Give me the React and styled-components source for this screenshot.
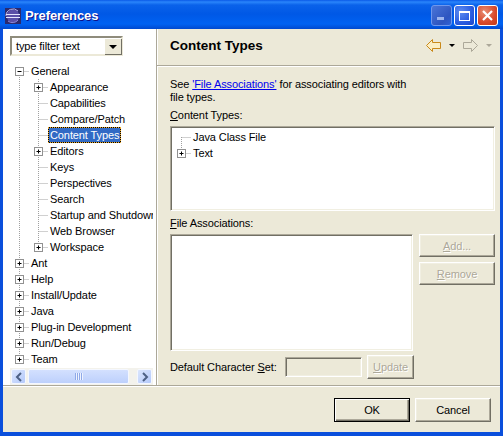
import React from "react";
import styled, { createGlobalStyle } from "styled-components";

const GlobalStyle = createGlobalStyle`
  html, body {
    margin: 0;
    padding: 0;
    background: #ece9d8;
  }
`;

const Window = styled.div`
  width: 503px;
  height: 436px;
  display: flex;
  flex-direction: column;
  overflow: hidden;
  background: #0a4fdc;
  font-family: "Liberation Sans", Arial, sans-serif;
  font-size: 11px;
  letter-spacing: -0.1px;
  color: #000;
`;

const TitleBar = styled.div`
  height: 29px;
  flex: none;
  display: flex;
  align-items: center;
  padding: 2px 5px 0 5px;
  box-sizing: border-box;
  background: linear-gradient(
    to bottom,
    #0a5ae8 0,
    #2a85fb 2px,
    #0a62ea 5px,
    #0058e6 14px,
    #0062f2 24px,
    #0049cf 29px
  );
`;

const TitleText = styled.span`
  margin-left: 4px;
  flex: 1;
  color: #fff;
  font-weight: bold;
  font-size: 13px;
  text-shadow: 1px 1px #0f1089;
`;

const Caption = styled.div`
  display: flex;
  gap: 2px;
`;

const CaptionButton = styled.div`
  width: 21px;
  height: 21px;
  box-sizing: border-box;
  border: 1px solid ${(p) => (p.$dim ? "#6f97ec" : "#fff")};
  border-radius: 3px;
  background: ${(p) =>
    p.$close
      ? "radial-gradient(circle at 35% 30%, #e88d72, #d8482a 60%, #c23a17)"
      : p.$dim
        ? "linear-gradient(135deg, #4a75d8, #2d55c0 70%, #2f62d6)"
        : "radial-gradient(circle at 30% 30%, #5e8cf0, #2a5ce0 60%, #1d45c8)"};
  display: flex;
  align-items: center;
  justify-content: center;
`;

const Client = styled.div`
  flex: 1;
  min-height: 0;
  margin: 0 3px 4px;
  display: flex;
  flex-direction: column;
  background: #ece9d8;
`;

const Split = styled.div`
  height: 356px;
  flex: none;
  display: flex;
  border-bottom: 1px solid #aca899;
  box-shadow: 0 1px #fff;
`;

const Sidebar = styled.div`
  width: 153px;
  flex: none;
  box-sizing: border-box;
  background: #fff;
  padding: 7px 0 0 7px;
  display: flex;
  flex-direction: column;
`;

const Combo = styled.div`
  width: 113px;
  height: 20px;
  box-sizing: border-box;
  display: flex;
  align-items: center;
  justify-content: space-between;
  padding: 0 0 0 4px;
  background: #fff;
  border: 2px solid #8f8c7c;
  border-right-color: #ece9d8;
  border-bottom-color: #ece9d8;
`;

const ComboButton = styled.div`
  width: 17px;
  height: 16px;
  background: #ece9d8;
  border-left: 1px solid #fff;
  border-top: 1px solid #fff;
  box-sizing: border-box;
  box-shadow: 1px 1px #716f64;
  display: flex;
  align-items: center;
  justify-content: center;
`;

const DownTriangle = styled.span`
  width: 0;
  height: 0;
  border-left: ${(p) => p.$size || 4}px solid transparent;
  border-right: ${(p) => p.$size || 4}px solid transparent;
  border-top: ${(p) => p.$size || 4}px solid ${(p) => p.$color || "#000"};
  display: block;
`;

const Tree = styled.div`
  width: 143px;
  height: 305px;
  margin-top: 7px;
  overflow: hidden;
`;

const TreeRow = styled.div`
  height: 16px;
  display: flex;
  align-items: center;
  white-space: nowrap;
`;

const TreeLabel = styled.span`
  padding: 0 2px;
  height: 16px;
  line-height: 16px;
  box-sizing: border-box;
  color: #000;
`;

const SelectedLabel = styled(TreeLabel)`
  padding: 0 1px;
  line-height: 14px;
  color: #fff;
  border: 1px dotted #eaa82c;
  background: linear-gradient(#316ac5, #316ac5) padding-box, #000 border-box;
`;

const Scrollbar = styled.div`
  width: 143px;
  height: 17px;
  box-sizing: border-box;
  padding: 1px;
  display: flex;
  background: #f3f2ec;
`;

const ScrollButton = styled.div`
  width: 15px;
  flex: none;
  box-sizing: border-box;
  border: 1px solid #f4f7ff;
  border-radius: 2px;
  background: linear-gradient(135deg, #dbe6fe, #b4c9fa);
  display: flex;
  align-items: center;
  justify-content: center;
`;

const ScrollThumb = styled.div`
  width: 101px;
  margin: 0 8px 0 2px;
  box-sizing: border-box;
  border: 1px solid #f4f7ff;
  border-radius: 2px;
  background: linear-gradient(to bottom, #d3e0fe, #bdd0fc);
  display: flex;
  align-items: center;
  justify-content: center;
  gap: 1px;
`;

const Grip = styled.span`
  width: 1px;
  height: 7px;
  background: #8fa9e8;
  box-shadow: 1px 0 #eef3ff;
`;

const Main = styled.div`
  flex: 1;
  display: flex;
  flex-direction: column;
  border-left: 1px solid #aca899;
  box-shadow: inset 1px 0 #fff;
`;

const Header = styled.div`
  height: 37px;
  flex: none;
  box-sizing: border-box;
  display: flex;
  align-items: center;
  padding: 0 8px 4px 13px;
  border-bottom: 1px solid #aca899;
  box-shadow: 0 1px #fff;
`;

const HeaderTitle = styled.div`
  flex: 1;
  font-weight: bold;
  font-size: 13.5px;
  letter-spacing: 0;
`;

const HeaderTools = styled.div`
  display: flex;
  align-items: center;
  gap: 8px;
`;

const Body = styled.div`
  flex: 1;
  padding: 12px 5px 0 13px;
  display: flex;
  flex-direction: column;
`;

const Description = styled.div`
  line-height: 13px;
  margin-bottom: 5px;
`;

const LinkText = styled.span`
  color: #0000ee;
  text-decoration: underline;
`;

const FieldLabel = styled.div`
  height: 13px;
  line-height: 13px;
  margin-top: ${(p) => p.$top || 0}px;
`;

const Sunken = styled.div`
  box-sizing: border-box;
  background: ${(p) => (p.$flat ? "#ece9d8" : "#fff")};
  border: 1px solid;
  border-color: #aca899 #fff #fff #aca899;
  box-shadow: inset 1px 1px #716f64, inset -1px -1px #f1efe2;
`;

const TypesList = styled(Sunken)`
  margin-top: 4px;
  height: 85px;
  padding: 2px 0 0 1px;
`;

const AssocRow = styled.div`
  margin-top: 4px;
  display: flex;
  gap: 6px;
`;

const AssocList = styled(Sunken)`
  width: 243px;
  height: 117px;
`;

const SideButtons = styled.div`
  display: flex;
  flex-direction: column;
  gap: 5px;
`;

const PushButton = styled.button`
  width: ${(p) => p.$w}px;
  height: ${(p) => p.$h}px;
  padding: 0;
  box-sizing: border-box;
  font: inherit;
  letter-spacing: inherit;
  background: #ece9d8;
  color: ${(p) => (p.disabled ? "#aca899" : "#000")};
  text-shadow: ${(p) => (p.disabled ? "1px 1px #fff" : "none")};
  border: 1px solid;
  border-color: ${(p) =>
    p.$default ? "#000" : "#fff #716f64 #716f64 #fff"};
  box-shadow: ${(p) =>
    p.$default
      ? "inset 1px 1px #fff, inset -1px -1px #716f64, inset -2px -2px #aca899"
      : "inset -1px -1px #aca899, inset 1px 1px #f1efe2"};
`;

const CharsetRow = styled.div`
  margin-top: 4px;
  display: flex;
  align-items: center;
`;

const CharsetLabel = styled.span`
  width: 115px;
  flex: none;
`;

const CharsetInput = styled(Sunken)`
  width: 77px;
  height: 20px;
  margin-right: 5px;
`;

const Footer = styled.div`
  flex: 1;
  display: flex;
  justify-content: flex-end;
  align-items: flex-start;
  gap: 5px;
  padding: 12px 9px 0 0;
`;

const Mnemonic = styled.span`
  text-decoration: underline;
`;

function Connector({ up, down, right, toggle, open }) {
  return (
    <svg width="19" height="16" style={{ flex: "none", display: "block" }}>
      <g stroke="#a0a0a0" strokeDasharray="1 1" fill="none">
        {up && <path d="M9.5 0V8" />}
        {down && <path d="M9.5 8V16" />}
        {right && <path d="M9.5 8.5H19" />}
      </g>
      {toggle && (
        <g>
          <rect x="5.5" y="4.5" width="8" height="8" fill="#fff" stroke="#919191" />
          <path d="M7.5 8.5h4" stroke="#000" />
          {!open && <path d="M9.5 6.5v4" stroke="#000" />}
        </g>
      )}
    </svg>
  );
}

const children = [
  { label: "Appearance", toggle: true },
  { label: "Capabilities" },
  { label: "Compare/Patch" },
  { label: "Content Types", selected: true },
  { label: "Editors", toggle: true },
  { label: "Keys" },
  { label: "Perspectives" },
  { label: "Search" },
  { label: "Startup and Shutdown" },
  { label: "Web Browser" },
  { label: "Workspace", toggle: true, last: true },
];

const roots = ["Ant", "Help", "Install/Update", "Java", "Plug-in Development", "Run/Debug", "Team"];

function EclipseIcon() {
  return (
    <svg width="16" height="16" viewBox="0 0 16 16" style={{ flex: "none" }}>
      <rect width="16" height="16" fill="#2b2a6e" />
      <circle cx="8" cy="8" r="6.5" fill="#5a4fa8" />
      <path d="M1 8a7 7 0 0 1 12-5" stroke="#b9b4e8" fill="none" />
      <path d="M1 6.5h14M1 9.5h14" stroke="#e6e6ff" />
      <path d="M3 13a7 7 0 0 0 10-1" stroke="#8f88d8" fill="none" />
    </svg>
  );
}

function Arrow({ flip, fill, stroke }) {
  return (
    <svg
      width="15"
      height="13"
      viewBox="0 0 15 13"
      style={{ transform: flip ? "scaleX(-1)" : "none", display: "block" }}
    >
      <path d="M0.5 6.5L6.5 0.5V3.5H14.5V9.5H6.5V12.5Z" fill={fill} stroke={stroke} />
    </svg>
  );
}

export default function App() {
  return (
    <Window>
      <GlobalStyle />
      <TitleBar>
        <EclipseIcon />
        <TitleText>Preferences</TitleText>
        <Caption>
          <CaptionButton $dim>
            <svg width="11" height="11"><rect x="1" y="7" width="7" height="3" fill="#9db5ee" /></svg>
          </CaptionButton>
          <CaptionButton>
            <svg width="13" height="13"><rect x="1.5" y="2.5" width="10" height="9" fill="none" stroke="#fff" /><rect x="1" y="2" width="11" height="2" fill="#fff" /></svg>
          </CaptionButton>
          <CaptionButton $close>
            <svg width="13" height="13"><path d="M2 2L11 11M11 2L2 11" stroke="#fff" strokeWidth="2.2" /></svg>
          </CaptionButton>
        </Caption>
      </TitleBar>
      <Client>
        <Split>
          <Sidebar>
            <Combo>
              type filter text
              <ComboButton>
                <DownTriangle />
              </ComboButton>
            </Combo>
            <Tree>
              <TreeRow>
                <Connector down right toggle open />
                <TreeLabel>General</TreeLabel>
              </TreeRow>
              {children.map((item) => (
                <TreeRow key={item.label}>
                  <Connector up down />
                  <Connector up down={!item.last} right toggle={item.toggle} />
                  {item.selected ? (
                    <SelectedLabel>{item.label}</SelectedLabel>
                  ) : (
                    <TreeLabel>{item.label}</TreeLabel>
                  )}
                </TreeRow>
              ))}
              {roots.map((label, i) => (
                <TreeRow key={label}>
                  <Connector up down={i < roots.length - 1} right toggle />
                  <TreeLabel>{label}</TreeLabel>
                </TreeRow>
              ))}
            </Tree>
            <Scrollbar>
              <ScrollButton>
                <svg width="8" height="10"><path d="M6 1L2 5L6 9" fill="none" stroke="#4d6185" strokeWidth="2" /></svg>
              </ScrollButton>
              <ScrollThumb>
                <Grip /><Grip /><Grip /><Grip />
              </ScrollThumb>
              <ScrollButton>
                <svg width="8" height="10"><path d="M2 1L6 5L2 9" fill="none" stroke="#4d6185" strokeWidth="2" /></svg>
              </ScrollButton>
            </Scrollbar>
          </Sidebar>
          <Main>
            <Header>
              <HeaderTitle>Content Types</HeaderTitle>
              <HeaderTools>
                <Arrow fill="#fbeec4" stroke="#c9891a" />
                <DownTriangle $size={3} />
                <Arrow flip fill="#ece9d8" stroke="#aca899" />
                <DownTriangle $size={3} $color="#aca899" />
              </HeaderTools>
            </Header>
            <Body>
              <Description>
                See <LinkText>'File Associations'</LinkText> for associating editors with
                <br />
                file types.
              </Description>
              <FieldLabel>
                <Mnemonic>C</Mnemonic>ontent Types:
              </FieldLabel>
              <TypesList>
                <TreeRow>
                  <Connector down right />
                  <TreeLabel>Java Class File</TreeLabel>
                </TreeRow>
                <TreeRow>
                  <Connector up right toggle />
                  <TreeLabel>Text</TreeLabel>
                </TreeRow>
              </TypesList>
              <FieldLabel $top={6}>
                <Mnemonic>F</Mnemonic>ile Associations:
              </FieldLabel>
              <AssocRow>
                <AssocList />
                <SideButtons>
                  <PushButton $w={76} $h={23} disabled>
                    <Mnemonic>A</Mnemonic>dd...
                  </PushButton>
                  <PushButton $w={76} $h={23} disabled>
                    <Mnemonic>R</Mnemonic>emove
                  </PushButton>
                </SideButtons>
              </AssocRow>
              <CharsetRow>
                <CharsetLabel>
                  Default Character <Mnemonic>S</Mnemonic>et:
                </CharsetLabel>
                <CharsetInput $flat />
                <PushButton $w={47} $h={24} disabled>
                  <Mnemonic>U</Mnemonic>pdate
                </PushButton>
              </CharsetRow>
            </Body>
          </Main>
        </Split>
        <Footer>
          <PushButton $w={76} $h={24} $default>OK</PushButton>
          <PushButton $w={76} $h={24}>Cancel</PushButton>
        </Footer>
      </Client>
    </Window>
  );
}
